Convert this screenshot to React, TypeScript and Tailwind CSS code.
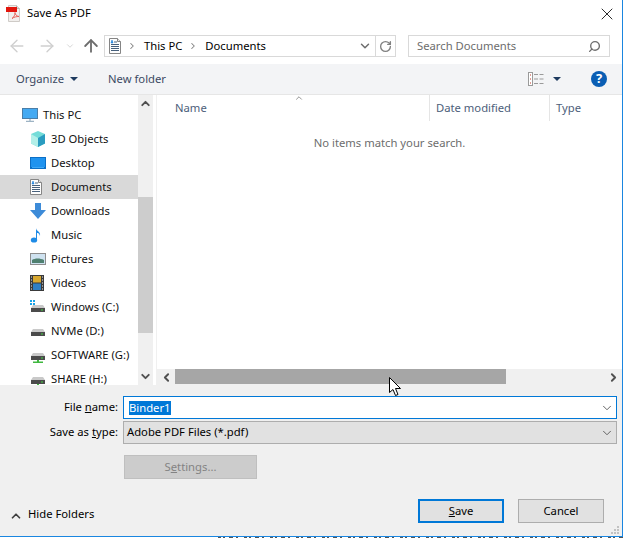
import { ChevronDown, ChevronUp, ChevronLeft, ChevronRight, ArrowLeft, ArrowRight, ArrowUp, RotateCw, Search, X } from "lucide-react";

function PdfIcon() {
  return (
    <svg width="16" height="17" viewBox="0 0 16 17">
      <path d="M2.500.500h8l3 3v13h-11z" fill="#f1efed" stroke="#cfcbc7" />
      <path d="M10.500.500v3h3" fill="#dcd8d4" stroke="#bdb9b5" />
      <rect x="0" y="2" width="11" height="5" fill="#e2160d" />
      <path d="M6 13.500c2-1.500 3-3.500 3-6 0 2 1.500 3.500 4 4-2.500 0-5 .5-7 2z" fill="none" stroke="#e5574e" strokeWidth="0.9" />
    </svg>
  );
}

function DocIcon() {
  return (
    <svg width="12" height="16" viewBox="0 0 12 16">
      <path d="M.5.5h8l3 3v12H.5z" fill="#fdfdfd" stroke="#858585" />
      <path d="M8.500.500v3h3" fill="#e8e8e8" stroke="#858585" />
      <path d="M5 4h3M2 6.500h8M2 8.500h8M2 10.500h8M2 12.500h8" stroke="#47607c" strokeWidth="1" />
      <path d="M2 5l1-3 1 3z" fill="#1f82dc" stroke="#1f82dc" strokeWidth="0.6" />
    </svg>
  );
}

function MonitorIcon() {
  return (
    <svg width="16" height="14" viewBox="0 0 16 14">
      <rect x="0.5" y="0.5" width="15" height="10" fill="#45aaf2" stroke="#4a7ea8" />
      <path d="M4 13.500h8M8 11v2" stroke="#9db3c4" strokeWidth="1.3" />
    </svg>
  );
}

function CubeIcon() {
  return (
    <svg width="16" height="16" viewBox="0 0 16 16">
      <path d="M8 0l7 3v9.500l-7 3.500-7-3.500V3z" fill="#74dcd8" />
      <path d="M8 7l7-4v9.500l-7 3.500z" fill="#2a9cc0" />
      <path d="M1 3l7 4v9l-7-3.500z" fill="#b2efe8" />
    </svg>
  );
}

function DesktopIcon() {
  return (
    <svg width="16" height="12" viewBox="0 0 16 12">
      <rect width="16" height="12" fill="#0c6fc6" />
      <rect x="1" y="1" width="14" height="9" fill="#1f93ef" />
      <path d="M2 10.500h12" stroke="#3ea8f5" />
    </svg>
  );
}

function DownloadIcon() {
  return (
    <svg width="16" height="16" viewBox="0 0 16 16">
      <path d="M5 0h6v7h5l-8 9-8-9h5z" fill="#3d8bd8" />
    </svg>
  );
}

function MusicIcon() {
  return (
    <svg width="12" height="16" viewBox="0 0 12 16">
      <ellipse cx="4" cy="13" rx="3.2" ry="2.6" fill="#1e8be6" />
      <path d="M6 13V1c0 3 5 3.500 4 8-.5-2.500-2-3-3-3v7z" fill="#1e8be6" />
    </svg>
  );
}

function PicturesIcon() {
  return (
    <svg width="16" height="12" viewBox="0 0 16 12">
      <rect x="0.5" y="0.5" width="15" height="11" fill="#cfe2f0" stroke="#8d8d8d" />
      <path d="M2 7c3-2 8-2 12 0v3H2z" fill="#4f8070" />
    </svg>
  );
}

function VideosIcon() {
  return (
    <svg width="14" height="16" viewBox="0 0 14 16">
      <rect width="14" height="16" fill="#3a3a3a" />
      <rect x="3" y="1" width="8" height="6.500" fill="#d8a830" />
      <rect x="3" y="8.500" width="8" height="6.500" fill="#2f7fc4" />
      <path d="M1 2h1M1 5h1M1 8h1M1 11h1M1 14h1M12 2h1M12 5h1M12 8h1M12 11h1M12 14h1" stroke="#eee" />
    </svg>
  );
}

function DriveIcon({ mark }: { mark?: "windows" | "network" }) {
  return (
    <svg width="16" height="16" viewBox="0 0 16 16">
      {mark === "windows" && <path d="M0 1h2v2H0zM3 1h2v2H3zM0 4h2v2H0zM3 4h2v2H3z" fill="#18a3e8" />}
      <path d="M3 6h10l2 3H1z" fill="#c9c9c9" />
      <rect x="1" y="9" width="14" height="4" fill="#4b4b4b" />
      <rect x="11" y="10.500" width="2" height="1" fill="#42d642" />
      {mark === "network" && <path d="M7 13h2v1.500h4V16H3v-1.500h4z" fill="#3fb83f" />}
    </svg>
  );
}

function ViewsIcon() {
  return (
    <svg width="16" height="14" viewBox="0 0 16 14">
      <rect x="0.5" y="0.5" width="4" height="13" fill="#fff" stroke="#9a9a9a" />
      <path d="M2 3h1M2 7h1M2 11h1" stroke="#c0392b" />
      <path d="M6 2.500h4M11.500 2.500h4M6 7h4M11.500 7h4M6 11.500h4M11.500 11.500h4" stroke="#9a9a9a" />
    </svg>
  );
}

function Cursor() {
  return (
    <svg width="13" height="20" viewBox="0 0 13 20" className="absolute left-[389px] top-[377px]">
      <path d="M.5.500v15l3.500-3 2.500 6 2.500-1-2.500-6h5z" fill="#fff" stroke="#000" strokeWidth="1" />
    </svg>
  );
}

function Grip() {
  return (
    <svg width="9" height="9" viewBox="0 0 9 9" className="absolute left-[611px] top-[526px]">
      <path d="M6 0h2v2H6zM3 3h2v2H3zM6 3h2v2H6zM0 6h2v2H0zM3 6h2v2H3zM6 6h2v2H6z" fill="#c2c2c2" />
    </svg>
  );
}

const navItems = [
  { label: "3D Objects", icon: <CubeIcon /> },
  { label: "Desktop", icon: <DesktopIcon /> },
  { label: "Documents", icon: <DocIcon />, active: true },
  { label: "Downloads", icon: <DownloadIcon /> },
  { label: "Music", icon: <MusicIcon /> },
  { label: "Pictures", icon: <PicturesIcon /> },
  { label: "Videos", icon: <VideosIcon /> },
  { label: "Windows (C:)", icon: <DriveIcon mark="windows" /> },
  { label: "NVMe (D:)", icon: <DriveIcon /> },
  { label: "SOFTWARE (G:)", icon: <DriveIcon mark="network" /> },
  { label: "SHARE (H:)", icon: <DriveIcon mark="network" /> },
];

export default function App() {
  return (
    <div className="relative h-[538px] w-[626px] overflow-hidden bg-white font-['Noto_Sans',sans-serif] text-[11.25px] text-[#111111]">
      <div className="flex h-[537px] w-[623px] flex-col border-b border-r border-[#1a86e0] bg-white">
        {/* Title bar */}
        <div className="flex h-[32px] items-center pb-[5px] pl-[6px] pr-[5px]">
          <PdfIcon />
          <span className="ml-[5px] text-black">Save As PDF</span>
          <X className="ml-auto h-[20px] w-[20px] text-black" strokeWidth={1} />
        </div>

        {/* Address row */}
        <div className="flex h-[32px] items-start pl-[7px] pt-[3px]">
          <div className="flex h-[22px] items-center text-[#cfcfcf]">
            <ArrowLeft className="h-[20px] w-[20px]" strokeWidth={1.6} />
            <ArrowRight className="ml-[10px] h-[20px] w-[20px]" strokeWidth={1.6} />
            <ChevronDown className="ml-[8px] h-[10px] w-[10px]" strokeWidth={2} />
            <ArrowUp className="ml-[6px] h-[20px] w-[20px] text-[#6d6d6d]" strokeWidth={2.2} />
          </div>
          <div className="ml-[3px] flex h-[22px] w-[292px] items-center border border-[#d9d9d9] pl-[4px]">
            <DocIcon />
            <ChevronRight className="ml-[6px] h-[10px] w-[10px] text-[#808080]" strokeWidth={2.5} />
            <span className="ml-[7px] text-black">This PC</span>
            <ChevronRight className="ml-[6px] h-[10px] w-[10px] text-[#808080]" strokeWidth={2.5} />
            <span className="ml-[7px] text-black">Documents</span>
            <ChevronDown className="ml-auto mr-[3px] h-[14px] w-[14px] text-[#6d6d6d]" strokeWidth={2.5} />
            <div className="flex h-full w-[20px] items-center justify-center border-l border-[#d9d9d9]">
              <RotateCw className="h-[13px] w-[13px] text-[#808080]" strokeWidth={2.5} />
            </div>
          </div>
          <div className="ml-[12px] flex h-[22px] w-[202px] items-center justify-between border border-[#d9d9d9] px-[8px] text-[#6d6d6d]">
            <span>Search Documents</span>
            <Search className="h-[13px] w-[13px] -scale-x-100" strokeWidth={2.5} />
          </div>
        </div>

        {/* Command bar */}
        <div className="flex h-[30px] items-center bg-[#f3f4f6] pl-[16px] pr-[15px] text-[#3c4a63]">
          <span>Organize</span>
          <span className="ml-[6px] h-0 w-0 border-x-[4px] border-t-[4px] border-x-transparent border-t-[#1e3a5f]" />
          <span className="ml-[30px]">New folder</span>
          <div className="ml-auto flex items-center">
            <ViewsIcon />
            <span className="ml-[9px] h-0 w-0 border-x-[4px] border-t-[4px] border-x-transparent border-t-[#1e3a5f]" />
            <span className="ml-[30px] flex h-[16px] w-[16px] items-center justify-center rounded-full bg-[#0a5eb4] text-[13px] font-bold text-white">
              ?
            </span>
          </div>
        </div>

        {/* Browser panes */}
        <div className="flex h-[291px] border-t border-[#e6e6e6]">
          <div className="flex h-full w-[153px] overflow-hidden">
            <div className="h-full w-[138px] overflow-hidden pt-[8px]">
              <div className="flex h-[24px] items-center pl-[22px]">
                <span className="flex w-[21px]">
                  <MonitorIcon />
                </span>
                <span>This PC</span>
              </div>
              {navItems.map((item) => (
                <div
                  key={item.label}
                  className={`flex h-[24px] items-center pl-[30px] ${item.active ? "bg-[#d9d9d9]" : ""}`}
                >
                  <span className="flex w-[21px]">{item.icon}</span>
                  <span className="whitespace-nowrap leading-[12px]">{item.label}</span>
                </div>
              ))}
            </div>
            <div className="flex h-full w-[15px] flex-col items-center bg-[#f0f0f0] text-[#505050]">
              <div className="flex h-[17px] items-center">
                <ChevronUp className="h-[13px] w-[13px]" strokeWidth={3.5} />
              </div>
              <div className="mt-[85px] h-[136px] w-full bg-[#cdcdcd]" />
              <div className="mt-auto flex h-[17px] items-center">
                <ChevronDown className="h-[13px] w-[13px]" strokeWidth={3.5} />
              </div>
            </div>
          </div>

          <div className="ml-[3px] flex min-w-0 flex-1 flex-col border-l border-[#f0f0f0]">
            <div className="relative flex h-[26px] items-center text-[#4c607a]">
              <span className="w-[272px] pl-[18px]">Name</span>
              <span className="flex h-full w-[120px] items-center border-l border-[#e5e5e5] pl-[6px]">Date modified</span>
              <span className="flex h-full flex-1 items-center border-l border-[#e5e5e5] pl-[6px]">Type</span>
              <ChevronUp className="absolute left-[137px] top-[-2px] h-[10px] w-[10px] text-[#808080]" strokeWidth={2} />
            </div>
            <div className="flex-1 pt-[14px] text-center text-[#6d6d6d]">
              No items match your search.
            </div>
            <div className="flex h-[16px] items-start bg-[#f0f0f0] text-[#505050]">
              <div className="flex h-full w-[18px] items-center justify-center">
                <ChevronLeft className="h-[13px] w-[13px]" strokeWidth={3.5} />
              </div>
              <div className="h-[15px] w-[331px] bg-[#a6a6a6]" />
              <div className="ml-auto flex h-full w-[17px] items-center justify-center">
                <ChevronRight className="h-[13px] w-[13px]" strokeWidth={3.5} />
              </div>
            </div>
          </div>
        </div>

        {/* Save panel */}
        <div className="flex flex-1 flex-col bg-[#f0f0f0]">
          <div className="mt-[11px] flex h-[23px] items-center pr-[5px]">
            <span className="w-[118px] text-right text-black">
              File <span className="underline">n</span>ame:
            </span>
            <div className="ml-[5px] flex h-full flex-1 items-center border border-[#0078d7] bg-white pl-[5px]">
              <span className="bg-[#0078d7] leading-[14px] text-white">Binder1</span>
              <ChevronDown className="ml-auto mr-[2px] h-[14px] w-[14px] text-[#505050]" strokeWidth={1.5} />
            </div>
          </div>
          <div className="mt-[2px] flex h-[23px] items-center pr-[5px]">
            <span className="w-[118px] text-right text-black">
              Save as <span className="underline">t</span>ype:
            </span>
            <div className="ml-[5px] flex h-full flex-1 items-center border border-[#adadad] bg-[#e1e1e1] pl-[3px] text-black">
              <span>Adobe PDF Files (*.pdf)</span>
              <ChevronDown className="ml-auto mr-[2px] h-[14px] w-[14px] text-[#505050]" strokeWidth={1.5} />
            </div>
          </div>
          <div className="ml-[124px] mt-[11px] flex h-[24px] w-[133px] items-center justify-center border border-[#bfbfbf] bg-[#cccccc] text-[#838383]">
            <span>
              S<span className="underline">e</span>ttings...
            </span>
          </div>
          <div className="mt-[20px] flex items-center">
            <div className="flex items-center pl-[9px] text-black">
              <ChevronUp className="mt-[10px] h-[14px] w-[14px] text-[#404040]" strokeWidth={3} />
              <span className="ml-[5px] pt-[7px]">Hide Folders</span>
            </div>
            <div className="ml-auto flex items-center gap-[14px] pr-[18px] text-black">
              <button className="flex h-[24px] w-[86px] items-center justify-center border-2 border-[#0078d7] bg-[#e1e1e1]">
                <span>
                  <span className="underline">S</span>ave
                </span>
              </button>
              <button className="flex h-[24px] w-[86px] items-center justify-center border border-[#adadad] bg-[#e1e1e1]">
                Cancel
              </button>
            </div>
          </div>
        </div>
      </div>
      {/* Text of the page behind the dialog, just showing under its edge */}
      <svg width="408" height="1" className="absolute left-[218px] top-[537px]">
        <path d="M0 .5h408" stroke="#555" strokeDasharray="3 2 2 4 4 3 2 6" />
      </svg>
      <Grip />
      <Cursor />
    </div>
  );
}
